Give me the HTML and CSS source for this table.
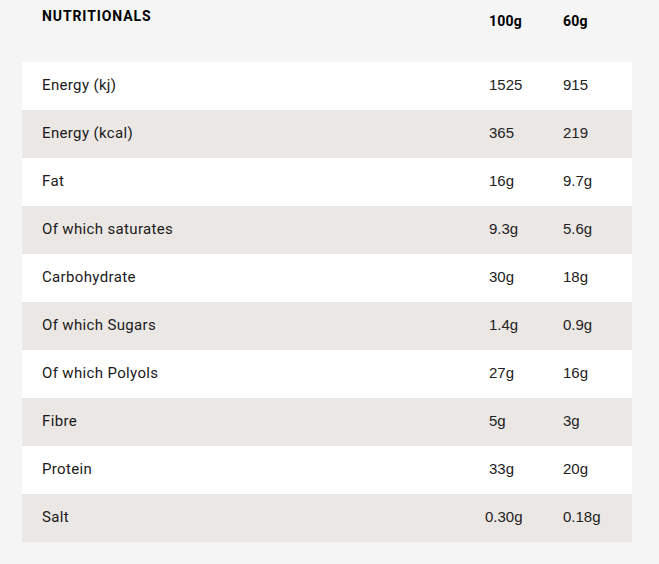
FILE: index.html
```html
<!DOCTYPE html>
<html>
<head>
<meta charset="utf-8">
<link rel="stylesheet" href="styles.css">
</head>
<body>
<div class="nutri">
  <div class="head">
    <div class="title">NUTRITIONALS</div>
    <div class="hcol">100g</div>
    <div class="hcol">60g</div>
  </div>
  <div class="table">
    <div class="row"><div class="label">Energy (kj)</div><div class="val">1525</div><div class="val">915</div></div>
    <div class="row alt"><div class="label">Energy (kcal)</div><div class="val">365</div><div class="val">219</div></div>
    <div class="row"><div class="label">Fat</div><div class="val">16g</div><div class="val">9.7g</div></div>
    <div class="row alt"><div class="label">Of which saturates</div><div class="val">9.3g</div><div class="val">5.6g</div></div>
    <div class="row"><div class="label">Carbohydrate</div><div class="val">30g</div><div class="val">18g</div></div>
    <div class="row alt"><div class="label">Of which Sugars</div><div class="val">1.4g</div><div class="val">0.9g</div></div>
    <div class="row"><div class="label">Of which Polyols</div><div class="val">27g</div><div class="val">16g</div></div>
    <div class="row alt"><div class="label">Fibre</div><div class="val">5g</div><div class="val">3g</div></div>
    <div class="row"><div class="label">Protein</div><div class="val">33g</div><div class="val">20g</div></div>
    <div class="row alt"><div class="label">Salt</div><div class="val wide">0.30g</div><div class="val">0.18g</div></div>
  </div>
</div>
</body>
</html>
```
FILE: styles.css
```css
html, body {
  margin: 0;
  padding: 0;
  background: #f5f5f5;
}
body {
  color: #1a1a1a;
  font-family: Roboto, "Liberation Sans", sans-serif;
}
.nutri {
  margin-left: 22px;
  width: 610px;
}
.head {
  display: grid;
  grid-template-columns: 467px 74px 1fr;
  height: 62px;
  font-weight: bold;
}
.title {
  padding-left: 20px;
  padding-top: 8px;
  font-size: 14px;
  letter-spacing: 0.9px;
  color: #000;
}
.hcol {
  padding-top: 13px;
  font-size: 14px;
  letter-spacing: 0.2px;
  color: #000;
}
.table {
  background: #fff;
}
.row {
  display: grid;
  grid-template-columns: 467px 74px 1fr;
  height: 48px;
  align-items: center;
  background: #fff;
}
.row.alt {
  background: #ebe7e4;
}
.label {
  padding-left: 20px;
  padding-bottom: 2px;
  font-size: 15px;
  letter-spacing: 0.35px;
}
.val {
  padding-bottom: 3px;
  font-family: "Liberation Sans", Arial, sans-serif;
  font-size: 15px;
  color: #222;
}
.val.wide {
  margin-left: -4px;
}
```
